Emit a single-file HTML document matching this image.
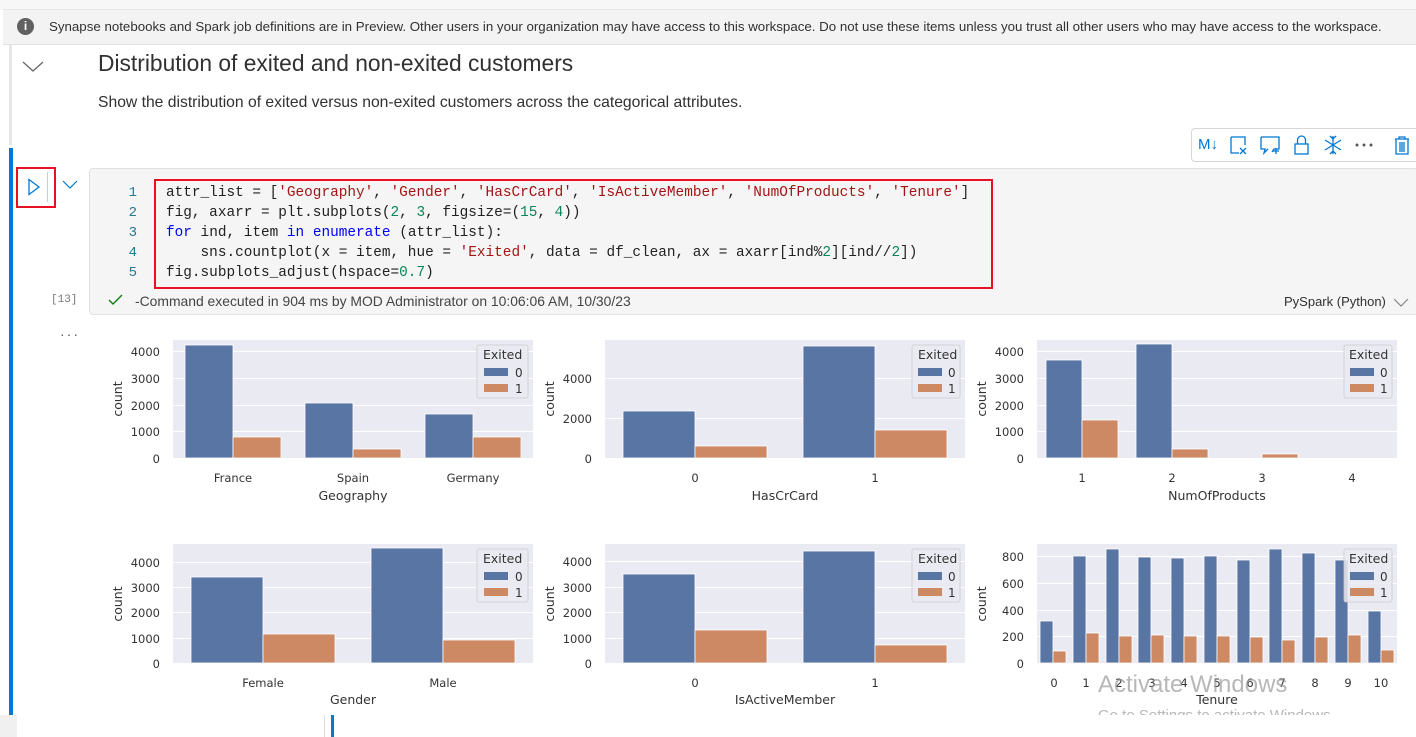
<!DOCTYPE html>
<html><head><meta charset="utf-8"><style>
*{margin:0;padding:0;box-sizing:border-box}
body{width:1416px;height:737px;overflow:hidden;background:#fff;font-family:"Liberation Sans",sans-serif;position:relative}
.a{position:absolute}
.code{font-family:"Liberation Mono",monospace;font-size:14.4px;letter-spacing:0;white-space:pre;color:#222;line-height:20px}
.s{color:#a31515}.n{color:#098658}.k{color:#0000ff}
.ln{font-family:"Liberation Mono",monospace;font-size:14px;color:#237893;line-height:20px;text-align:right;width:20px}
svg text{font-family:"DejaVu Sans","Liberation Sans",sans-serif;fill:#333}
</style></head><body>
<div class="a" style="left:0;top:0;width:1416px;height:10px;background:#f7f7f7"></div>
<div class="a" style="left:3px;top:9px;width:1413px;height:36px;background:#f3f3f3;border-top:1px solid #e6e6e6;border-bottom:1px solid #e0e0e0"></div>
<div class="a" style="left:17px;top:18px;width:17px;height:17px;border-radius:50%;background:#616161;color:#fff;font-size:12px;font-weight:bold;text-align:center;line-height:17px">i</div>
<div class="a" style="left:49px;top:19px;font-size:13.3px;color:#323130;white-space:nowrap">Synapse notebooks and Spark job definitions are in Preview. Other users in your organization may have access to this workspace. Do not use these items unless you trust all other users who may have access to the workspace.</div>
<div class="a" style="left:9px;top:45px;width:3px;height:100px;background:#e6e6e6"></div>
<svg class="a" style="left:22px;top:60px" width="22" height="14"><path d="M1 2 L11 11 L21 2" fill="none" stroke="#666" stroke-width="1.3"/></svg>
<div class="a" style="left:98px;top:50px;font-size:22.8px;color:#323130;white-space:nowrap">Distribution of exited and non-exited customers</div>
<div class="a" style="left:98px;top:94px;font-size:15.7px;color:#323130;white-space:nowrap">Show the distribution of exited versus non-exited customers across the categorical attributes.</div>
<div class="a" style="left:9px;top:148px;width:4px;height:567px;background:#0078d4"></div>
<div class="a" style="left:1191px;top:128px;width:230px;height:34px;border:1px solid #d6d6d6;border-radius:4px;background:#fff"></div>
<div class="a" style="left:1198px;top:136px;font-size:15px;color:#0078d4">M↓</div>
<svg class="a" style="left:1229px;top:135px" width="200" height="22" fill="none" stroke="#0078d4" stroke-width="1.3">
<path d="M2 2h14v8M2 2v16h8M11 13l6 6M17 13l-6 6"/>
<path d="M32 2h18v12h-5l-2 3M32 2v12h4l-1 4 4-4M44 16h6M47 13v6"/>
<rect x="66" y="9" width="13" height="10"/><path d="M68.5 9V5a4 4 0 0 1 8 0v4"/>
<path d="M104 1v18M96 5l16 10M112 5l-16 10M101 1l3 3 3-3M101 19l3-3 3 3"/>
<circle cx="128" cy="10" r="0.8" fill="#555" stroke="#555"/><circle cx="135" cy="10" r="0.8" fill="#555" stroke="#555"/><circle cx="142" cy="10" r="0.8" fill="#555" stroke="#555"/>
<path d="M166 4h14M170 4V2h6v2M167 4v15h12V4M171 7v10M173 7v10M175 7v10"/>
</svg>
<div class="a" style="left:16px;top:167px;width:40px;height:41px;border:2px solid #e81123"></div>
<svg class="a" style="left:27px;top:178px" width="14" height="18"><path d="M2 1.5 L12 9 L2 16.5Z" fill="none" stroke="#0078d4" stroke-width="1.3"/></svg>
<div class="a" style="left:47px;top:172px;width:1px;height:30px;background:#ccc"></div>
<svg class="a" style="left:62px;top:180px" width="16" height="10"><path d="M1 1 L8 8 L15 1" fill="none" stroke="#0078d4" stroke-width="1.2"/></svg>
<div class="a" style="left:89px;top:168px;width:1330px;height:147px;background:#f5f5f5;border:1px solid #e0e0e0;border-radius:4px"></div>
<div class="a ln" style="left:117px;top:183px">1<br>2<br>3<br>4<br>5</div>
<div class="a" style="left:154px;top:179px;width:839px;height:110px;border:2px solid #e81123"></div>
<div class="a code" style="left:166px;top:183px">attr_list = [<span class="s">'Geography'</span>, <span class="s">'Gender'</span>, <span class="s">'HasCrCard'</span>, <span class="s">'IsActiveMember'</span>, <span class="s">'NumOfProducts'</span>, <span class="s">'Tenure'</span>]
fig, axarr = plt.subplots(<span class="n">2</span>, <span class="n">3</span>, figsize=(<span class="n">15</span>, <span class="n">4</span>))
<span class="k">for</span> ind, item <span class="k">in</span> <span class="k">enumerate</span> (attr_list):
    sns.countplot(x = item, hue = <span class="s">'Exited'</span>, data = df_clean, ax = axarr[ind%<span class="n">2</span>][ind//<span class="n">2</span>])
fig.subplots_adjust(hspace=<span class="n">0.7</span>)</div>
<div class="a" style="left:51px;top:294px;font-family:'Liberation Mono',monospace;font-size:11px;color:#777">[13]</div>
<svg class="a" style="left:108px;top:294px" width="16" height="12"><path d="M1 6 L5 10 L14 1" fill="none" stroke="#107c10" stroke-width="1.4"/></svg>
<div class="a" style="left:135px;top:293px;font-size:13.9px;color:#444;white-space:nowrap">-Command executed in 904 ms by MOD Administrator on 10:06:06 AM, 10/30/23</div>
<div class="a" style="left:1284px;top:294px;font-size:13px;color:#323130;white-space:nowrap">PySpark (Python)</div>
<svg class="a" style="left:1393px;top:298px" width="16" height="10"><path d="M1 1 L8 8 L15 1" fill="none" stroke="#888" stroke-width="1.2"/></svg>
<div class="a" style="left:60px;top:326px;font-size:14px;color:#555;letter-spacing:2px">···</div>
<svg class="a" style="left:0;top:0" width="1416" height="737">
<g fill="#eaeaf2"><rect x="173" y="340" width="360" height="119"/><rect x="605" y="340" width="360" height="119"/><rect x="1037" y="340" width="360" height="119"/>
<rect x="173" y="544" width="360" height="120"/><rect x="605" y="544" width="360" height="120"/><rect x="1037" y="544" width="360" height="120"/></g>
<g stroke="#fff" stroke-width="1">
<path d="M173 351.5h360M173 378.5h360M173 405.5h360M173 431.5h360M173 458.5h360"/>
<path d="M605 378.5h360M605 418.5h360M605 458.5h360"/>
<path d="M1037 351.5h360M1037 378.5h360M1037 405.5h360M1037 431.5h360M1037 458.5h360"/>
<path d="M173 562.5h360M173 587.5h360M173 612.5h360M173 638.5h360M173 663.5h360"/>
<path d="M605 561.5h360M605 587.5h360M605 612.5h360M605 638.5h360M605 663.5h360"/>
<path d="M1037 556.5h360M1037 583.5h360M1037 610.5h360M1037 636.5h360M1037 663.5h360"/>
</g>
<g fill="#5975a4" stroke="#fff" stroke-width="0.8">
<rect x="185" y="345" width="48" height="113"/><rect x="305" y="403" width="48" height="55"/><rect x="425" y="414" width="48" height="44"/>
<rect x="623" y="411" width="72" height="47"/><rect x="803" y="346" width="72" height="112"/>
<rect x="1046" y="360" width="36" height="98"/><rect x="1136" y="344" width="36" height="114"/>
<rect x="191" y="577" width="72" height="86"/><rect x="371" y="548" width="72" height="115"/>
<rect x="623" y="574" width="72" height="89"/><rect x="803" y="551" width="72" height="112"/>
<rect x="1040" y="621" width="13" height="42"/><rect x="1073" y="556" width="13" height="107"/><rect x="1106" y="549" width="13" height="114"/><rect x="1138" y="557" width="13" height="106"/><rect x="1171" y="558" width="13" height="105"/><rect x="1204" y="556" width="13" height="107"/><rect x="1237" y="560" width="13" height="103"/><rect x="1269" y="549" width="13" height="114"/><rect x="1302" y="553" width="13" height="110"/><rect x="1335" y="560" width="13" height="103"/><rect x="1368" y="611" width="13" height="52"/>
</g>
<g fill="#cc8963" stroke="#fff" stroke-width="0.8">
<rect x="233" y="437" width="48" height="21"/><rect x="353" y="449" width="48" height="9"/><rect x="473" y="437" width="48" height="21"/>
<rect x="695" y="446" width="72" height="12"/><rect x="875" y="430" width="72" height="28"/>
<rect x="1082" y="420" width="36" height="38"/><rect x="1172" y="449" width="36" height="9"/><rect x="1262" y="454" width="36" height="4"/>
<rect x="263" y="634" width="72" height="29"/><rect x="443" y="640" width="72" height="23"/>
<rect x="695" y="630" width="72" height="33"/><rect x="875" y="645" width="72" height="18"/>
<rect x="1053" y="651" width="13" height="12"/><rect x="1086" y="633" width="13" height="30"/><rect x="1119" y="636" width="13" height="27"/><rect x="1151" y="635" width="13" height="28"/><rect x="1184" y="636" width="13" height="27"/><rect x="1217" y="636" width="13" height="27"/><rect x="1250" y="637" width="13" height="26"/><rect x="1282" y="640" width="13" height="23"/><rect x="1315" y="637" width="13" height="26"/><rect x="1348" y="635" width="13" height="28"/><rect x="1381" y="650" width="13" height="13"/>
</g>
<g fill="#eaeaf2" fill-opacity="0.85" stroke="#ccc" stroke-width="0.8">
<rect x="477" y="345" width="51" height="53" rx="2"/><rect x="912" y="345" width="48" height="53" rx="2"/><rect x="1344" y="345" width="48" height="53" rx="2"/>
<rect x="477" y="549" width="51" height="53" rx="2"/><rect x="912" y="549" width="48" height="53" rx="2"/><rect x="1344" y="549" width="48" height="53" rx="2"/>
</g>
<g font-size="12.5">
<text x="483" y="359">Exited</text><text x="918" y="359">Exited</text><text x="1349" y="359">Exited</text>
<text x="483" y="563">Exited</text><text x="918" y="563">Exited</text><text x="1349" y="563">Exited</text>
</g>
<g font-size="12">
<text x="515" y="377">0</text><text x="515" y="393">1</text><text x="948" y="377">0</text><text x="948" y="393">1</text><text x="1380" y="377">0</text><text x="1380" y="393">1</text>
<text x="515" y="581">0</text><text x="515" y="597">1</text><text x="948" y="581">0</text><text x="948" y="597">1</text><text x="1380" y="581">0</text><text x="1380" y="597">1</text>
</g>
<g fill="#5975a4"><rect x="484" y="368" width="24" height="8"/><rect x="918" y="368" width="24" height="8"/><rect x="1350" y="368" width="24" height="8"/><rect x="484" y="572" width="24" height="8"/><rect x="918" y="572" width="24" height="8"/><rect x="1350" y="572" width="24" height="8"/></g>
<g fill="#cc8963"><rect x="484" y="384" width="24" height="8"/><rect x="918" y="384" width="24" height="8"/><rect x="1350" y="384" width="24" height="8"/><rect x="484" y="588" width="24" height="8"/><rect x="918" y="588" width="24" height="8"/><rect x="1350" y="588" width="24" height="8"/></g>
<g font-size="11.5" text-anchor="end">
<text x="160" y="356">4000</text><text x="160" y="383">3000</text><text x="160" y="410">2000</text><text x="160" y="436">1000</text><text x="160" y="463">0</text>
<text x="592" y="383">4000</text><text x="592" y="423">2000</text><text x="592" y="463">0</text>
<text x="1024" y="356">4000</text><text x="1024" y="383">3000</text><text x="1024" y="410">2000</text><text x="1024" y="436">1000</text><text x="1024" y="463">0</text>
<text x="160" y="567">4000</text><text x="160" y="592">3000</text><text x="160" y="617">2000</text><text x="160" y="643">1000</text><text x="160" y="668">0</text>
<text x="592" y="566">4000</text><text x="592" y="592">3000</text><text x="592" y="617">2000</text><text x="592" y="643">1000</text><text x="592" y="668">0</text>
<text x="1024" y="561">800</text><text x="1024" y="588">600</text><text x="1024" y="615">400</text><text x="1024" y="641">200</text><text x="1024" y="668">0</text>
</g>
<g font-size="12.5" text-anchor="middle">
<text transform="translate(122 399) rotate(-90)">count</text><text transform="translate(554 399) rotate(-90)">count</text><text transform="translate(986 399) rotate(-90)">count</text>
<text transform="translate(122 604) rotate(-90)">count</text><text transform="translate(554 604) rotate(-90)">count</text><text transform="translate(986 604) rotate(-90)">count</text>
</g>
<g font-size="11.5" text-anchor="middle">
<text x="233" y="482">France</text><text x="353" y="482">Spain</text><text x="473" y="482">Germany</text>
<text x="695" y="482">0</text><text x="875" y="482">1</text>
<text x="1082" y="482">1</text><text x="1172" y="482">2</text><text x="1262" y="482">3</text><text x="1352" y="482">4</text>
<text x="263" y="687">Female</text><text x="443" y="687">Male</text>
<text x="695" y="687">0</text><text x="875" y="687">1</text>
<text x="1054" y="687">0</text><text x="1086" y="687">1</text><text x="1119" y="687">2</text><text x="1152" y="687">3</text><text x="1184" y="687">4</text><text x="1217" y="687">5</text><text x="1250" y="687">6</text><text x="1282" y="687">7</text><text x="1315" y="687">8</text><text x="1348" y="687">9</text><text x="1381" y="687">10</text>
</g>
<g font-size="12.5" text-anchor="middle">
<text x="353" y="500">Geography</text><text x="785" y="500">HasCrCard</text><text x="1217" y="500">NumOfProducts</text>
<text x="353" y="704">Gender</text><text x="785" y="704">IsActiveMember</text><text x="1217" y="704">Tenure</text>
</g>
<text x="1098" y="692" font-size="24" style="fill:#999;fill-opacity:0.7;font-family:'Liberation Sans',sans-serif">Activate Windows</text>
<text x="1098" y="720" font-size="15" style="fill:#999;fill-opacity:0.7;font-family:'Liberation Sans',sans-serif">Go to Settings to activate Windows.</text>
</svg>
<div class="a" style="left:0;top:715px;width:1416px;height:22px;background:#fff"></div>
<div class="a" style="left:0;top:715px;width:17px;height:22px;background:#f0f0f0"></div>
<div class="a" style="left:324px;top:715px;width:1px;height:22px;background:#ddd"></div>
<div class="a" style="left:331px;top:715px;width:3px;height:22px;background:#0078d4"></div>
</body></html>
